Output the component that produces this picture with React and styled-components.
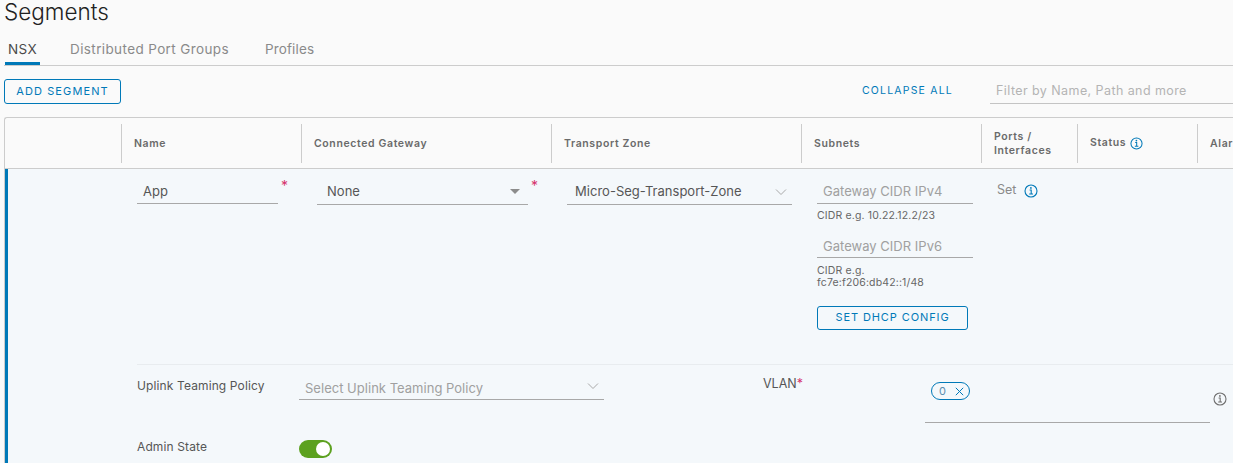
import React from "react";
import styled, { createGlobalStyle } from "styled-components";

const Global = createGlobalStyle`
  html, body { margin: 0; padding: 0; background: #fafafa; }
  body { font-family: "Inter", "Liberation Sans", sans-serif; color: #565656; }
`;

const Page = styled.div`
  width: 1233px;
  height: 463px;
  overflow: hidden;
  box-sizing: border-box;
  padding-left: 4px;
  background: #fafafa;
`;
const Title = styled.h1`
  margin: 0;
  box-sizing: border-box;
  height: 40px;
  font-size: 22.5px;
  line-height: 24px;
  font-weight: 300;
  color: #222222;
`;
const Tabs = styled.div`
  display: flex;
  box-sizing: border-box;
  height: 26px;
  border-bottom: 1px solid #cccccc;
  gap: 26px;
`;
const Tab = styled.div`
  box-sizing: border-box;
  height: 25px;
  padding: 1px ${p => (p.$first ? 3 : 4)}px 0;
  margin-left: ${p => p.$offset || 0}px;
  font-size: 13.5px;
  line-height: 17px;
  letter-spacing: ${p => p.$spacing ?? 0.38}px;
  color: ${p => (p.$active ? "#4a4a4a" : "#8a8a8a")};
  border-bottom: ${p => (p.$active ? "3px solid #0079b8" : "0")};
`;
const Toolbar = styled.div`
  display: flex;
  align-items: flex-start;
  height: 51px;
  padding-top: 13px;
  box-sizing: border-box;
`;
const OutlineButton = styled.button`
  box-sizing: border-box;
  width: ${p => p.$width}px;
  height: ${p => p.$height}px;
  padding: 0 0 2px;
  border: 1px solid #0079b8;
  border-radius: 3px;
  background: transparent;
  color: #0079b8;
  font-family: inherit;
  font-size: 11px;
  font-weight: 400;
  letter-spacing: ${p => p.$spacing}px;
  text-transform: uppercase;
  white-space: nowrap;
`;
const Collapse = styled.div`
  margin-left: auto;
  margin-top: 5px;
  font-size: 10.5px;
  font-weight: 400;
  letter-spacing: 1.2px;
  color: #0079b8;
  line-height: 14px;
`;
const Filter = styled.div`
  box-sizing: border-box;
  width: 243px;
  height: 25px;
  margin-left: 37px;
  padding: 4px 0 0 6px;
  border-bottom: 1px solid #c4c4c4;
  font-size: 12.5px;
  line-height: 16px;
  letter-spacing: 0.42px;
  color: #b4b4b4;
`;
const Table = styled.div`
  width: 1400px;
  height: 346px;
  border-top: 1px solid #cccccc;
  border-left: 1px solid #cccccc;
  border-radius: 3px 0 0 0;
  box-sizing: border-box;
`;
const HeadRow = styled.div`
  display: grid;
  grid-template-columns: 116px 180px 250px 250px 180px 96px 120px 200px;
  height: 51px;
  box-sizing: border-box;
  padding-top: 6px;
  border-bottom: 1px solid #cccccc;
`;
const HeadCell = styled.div`
  box-sizing: border-box;
  height: 39px;
  border-left: ${p => (p.$bare ? "0" : "1px solid #cccccc")};
  padding: 0 12px;
  display: flex;
  align-items: center;
  gap: 4px;
  font-size: 10.5px;
  font-weight: 600;
  line-height: 14px;
  letter-spacing: 0.62px;
  color: #6a6a6a;
  white-space: pre-line;
`;
const StatusText = styled.span`
  margin-top: -2px;
`;
const Body = styled.div`
  height: 295px;
  box-sizing: border-box;
  background: #f4f8fb;
  border-left: 3px solid #0079b8;
`;
const MainGrid = styled.div`
  display: grid;
  grid-template-columns: 113px 180px 250px 250px 180px 96px;
  height: 195px;
`;
const Cell = styled.div`
  display: flex;
  align-items: flex-start;
  padding: 13px 0 0 16px;
`;
const Field = styled.div`
  box-sizing: border-box;
  position: relative;
  width: ${p => p.$width}px;
  height: ${p => p.$height || 23}px;
  padding-left: ${p => p.$inset || 6}px;
  padding-top: ${p => p.$textTop || 0}px;
  border-bottom: 1px solid #a8a8a8;
  font-size: 13px;
  line-height: 18px;
  letter-spacing: 0.02px;
  color: ${p => (p.$muted ? "#a0a0a0" : "#565656")};
  white-space: nowrap;
`;
const Required = styled.span`
  margin-left: 3px;
  margin-top: -3px;
  font-size: 14px;
  line-height: 14px;
  color: #d6336c;
`;
const Caret = styled.span`
  position: absolute;
  right: 8px;
  top: 7px;
  width: 0;
  height: 0;
  border-left: 5.5px solid transparent;
  border-right: 5.5px solid transparent;
  border-top: 5px solid #8c8c8c;
`;
const ChevronWrap = styled.svg`
  position: absolute;
  right: 5px;
  top: 6px;
`;
const SubnetStack = styled.div`
  display: flex;
  flex-direction: column;
`;
const Hint = styled.div`
  margin-top: ${p => p.$top}px;
  height: ${p => p.$height}px;
  font-size: 10.5px;
  line-height: 12px;
  letter-spacing: 0.15px;
  color: #666666;
`;
const PortsCell = styled.div`
  display: flex;
  align-items: flex-start;
  gap: 8px;
  padding: 13px 0 0 16px;
  font-size: 12.5px;
  line-height: 16px;
  color: #8a8a8a;
`;
const PortsInfo = styled.span`
  display: block;
  margin-top: 2px;
  height: 14px;
`;
const Detail = styled.div`
  margin-left: 129px;
  border-top: 1px solid #e8ecef;
  width: 1096px;
  height: 100px;
  display: grid;
  grid-template-columns: 162px 464px 162px 285px 23px;
  grid-template-rows: 62px 38px;
`;
const Label = styled.div`
  padding-top: ${p => p.$top}px;
  font-size: 12px;
  line-height: 16px;
  letter-spacing: 0.12px;
  color: #565656;
  white-space: nowrap;
`;
const SelectSlot = styled.div`
  padding-top: 11px;
`;
const VlanLabel = styled.div`
  padding-top: 11px;
  font-size: 12.5px;
  line-height: 16px;
  color: #565656;
`;
const Star = styled.span`
  color: #d6336c;
`;
const ChipField = styled.div`
  box-sizing: border-box;
  height: 58px;
  padding: 17px 0 0 6px;
  border-bottom: 1px solid #a8a8a8;
`;
const Chip = styled.div`
  box-sizing: border-box;
  display: flex;
  align-items: center;
  width: 39px;
  height: 18px;
  padding-left: 7px;
  gap: 9px;
  border: 1px solid #0079b8;
  border-radius: 9px;
  font-size: 11px;
  color: #5a8db0;
`;
const InfoSlot = styled.div`
  padding: 25px 0 0 3px;
`;
const ToggleSlot = styled.div`
  padding-top: 13px;
`;
const Toggle = styled.div`
  position: relative;
  width: 33px;
  height: 18px;
  border-radius: 9px;
  background: #5ca11f;
`;
const Knob = styled.span`
  position: absolute;
  right: 2px;
  top: 2px;
  width: 14px;
  height: 14px;
  border-radius: 50%;
  background: #ffffff;
`;

const Info = ({ color = "#0079b8", size = 14 }) => (
  <svg width={size} height={size} viewBox="0 0 14 14" fill="none" stroke={color} strokeWidth="1.1">
    <circle cx="7" cy="7" r="6" />
    <path d="M5.6 6h1.6v3.9M5.2 10h3.8" />
    <circle cx="6.9" cy="3.9" r="0.9" fill={color} stroke="none" />
  </svg>
);
const Chevron = () => (
  <ChevronWrap width="12" height="8" viewBox="0 0 12 8" fill="none" stroke="#a9a9a9" strokeWidth="1">
    <path d="M1 1.5l5 5 5-5" />
  </ChevronWrap>
);

export default function App() {
  return (
    <Page>
      <Global />
      <Title>Segments</Title>
      <Tabs>
        <Tab $active $first $offset={1}>NSX</Tab>
        <Tab>Distributed Port Groups</Tab>
        <Tab $offset={2} $spacing={0.15}>Profiles</Tab>
      </Tabs>
      <Toolbar>
        <OutlineButton $width={117} $height={25} $spacing={1.1}>Add Segment</OutlineButton>
        <Collapse>COLLAPSE ALL</Collapse>
        <Filter>Filter by Name, Path and more</Filter>
      </Toolbar>
      <Table>
        <HeadRow>
          <HeadCell $bare />
          <HeadCell>Name</HeadCell>
          <HeadCell>Connected Gateway</HeadCell>
          <HeadCell>Transport Zone</HeadCell>
          <HeadCell>Subnets</HeadCell>
          <HeadCell>{"Ports /\nInterfaces"}</HeadCell>
          <HeadCell><StatusText>Status</StatusText><Info size={13} /></HeadCell>
          <HeadCell>Alarms</HeadCell>
        </HeadRow>
        <Body>
          <MainGrid>
            <div />
            <Cell>
              <Field $width={141} $height={22}>App</Field>
              <Required>*</Required>
            </Cell>
            <Cell>
              <Field $width={211} $inset={10}>None<Caret /></Field>
              <Required>*</Required>
            </Cell>
            <Cell>
              <Field $width={225} $inset={8}>Micro-Seg-Transport-Zone<Chevron /></Field>
            </Cell>
            <Cell>
              <SubnetStack>
                <Field $width={156} $height={22} $muted>Gateway CIDR IPv4</Field>
                <Hint $top={6} $height={25}>CIDR e.g. 10.22.12.2/23</Hint>
                <Field $width={156} $textTop={2} $muted>Gateway CIDR IPv6</Field>
                <Hint $top={7} $height={12}>CIDR e.g.</Hint>
                <Hint $top={0} $height={29}>fc7e:f206:db42::1/48</Hint>
                <OutlineButton $width={151} $height={24} $spacing={0.9}>Set DHCP Config</OutlineButton>
              </SubnetStack>
            </Cell>
            <PortsCell>Set <PortsInfo><Info /></PortsInfo></PortsCell>
          </MainGrid>
          <Detail>
            <Label $top={13}>Uplink Teaming Policy</Label>
            <SelectSlot>
              <Field $width={305} $height={24} $textTop={3} $muted>Select Uplink Teaming Policy<Chevron /></Field>
            </SelectSlot>
            <VlanLabel>VLAN<Star>*</Star></VlanLabel>
            <ChipField>
              <Chip>0
                <svg width="9" height="9" viewBox="0 0 9 9" fill="none" stroke="#0079b8" strokeWidth="1">
                  <path d="M.8.8l7.4 7.4M8.2.8L.8 8.2" />
                </svg>
              </Chip>
            </ChipField>
            <InfoSlot><Info color="#6f6f6f" /></InfoSlot>
            <Label $top={12}>Admin State</Label>
            <ToggleSlot>
              <Toggle><Knob /></Toggle>
            </ToggleSlot>
          </Detail>
        </Body>
      </Table>
    </Page>
  );
}
